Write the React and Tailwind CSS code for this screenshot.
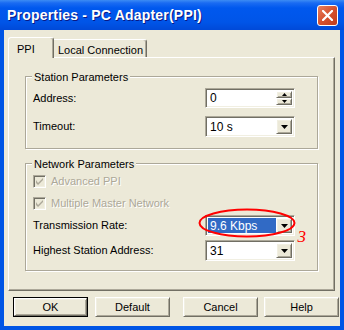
import React from "react";

const raised =
  "border border-t-white border-l-white border-r-[#716F64] border-b-[#716F64] shadow-[inset_1px_1px_0_#F1EFE2,inset_-1px_-1px_0_#ACA899]";
const sunken =
  "border border-t-[#ACA899] border-l-[#ACA899] border-r-white border-b-white shadow-[inset_1px_1px_0_#716F64,inset_-1px_-1px_0_#F1EFE2]";
const etched =
  "border border-[#ACA899] shadow-[inset_1px_1px_0_#fff,1px_1px_0_#fff]";

function Arrow({ small }) {
  return small ? (
    <svg width="5" height="3" viewBox="0 0 5 3">
      <path d="M0 0h5L2.5 3z" fill="#000" />
    </svg>
  ) : (
    <svg width="7" height="4" viewBox="0 0 7 4">
      <path d="M0 0h7L3.5 4z" fill="#000" />
    </svg>
  );
}

function Combo({ value, selected }) {
  return (
    <div className={`flex h-[21px] w-[90px] bg-white p-[2px] ${sunken}`}>
      <div
        className={`flex-1 flex items-center pl-[2px] text-[12px] leading-none ${
          selected ? "bg-[#316AC5] text-white" : "text-black"
        }`}
      >
        {value}
      </div>
      <div className={`flex h-[15px] w-[16px] items-center justify-center bg-[#ECE9D8] ${raised}`}>
        <Arrow />
      </div>
    </div>
  );
}

function Spin({ value }) {
  return (
    <div className={`flex h-[20px] w-[90px] bg-white p-[2px] ${sunken}`}>
      <div className="flex-1 flex items-center pl-[2px] text-[12px] leading-none">{value}</div>
      <div className="flex flex-col w-[16px]">
        <div className={`flex h-[8px] items-center justify-center bg-[#ECE9D8] ${raised}`}>
          <div className="rotate-180 flex">
            <Arrow small />
          </div>
        </div>
        <div className={`flex h-[8px] items-center justify-center bg-[#ECE9D8] ${raised}`}>
          <Arrow small />
        </div>
      </div>
    </div>
  );
}

function Check({ label }) {
  return (
    <div className="flex items-center h-[13px] gap-[5px]">
      <div className={`flex h-[13px] w-[13px] items-center justify-center bg-[#ECE9D8] ${sunken}`}>
        <svg width="7" height="7" viewBox="0 0 7 7">
          <path d="M0 2v3l2 2 5-5V-0L2 5z" fill="#ACA899" />
        </svg>
      </div>
      <span className="text-[#ACA899] [text-shadow:1px_1px_0_#fff]">{label}</span>
    </div>
  );
}

function Button({ label, isDefault, className = "" }) {
  if (isDefault) {
    return (
      <div className={`h-[20px] w-[75px] border border-black ${className}`}>
        <div className={`flex h-full items-center justify-center bg-[#ECE9D8] ${raised}`}>{label}</div>
      </div>
    );
  }
  return (
    <div className={`flex h-[20px] w-[75px] items-center justify-center bg-[#ECE9D8] ${raised} ${className}`}>
      {label}
    </div>
  );
}

export default function App() {
  return (
    <div className="w-[344px] h-[330px] flex flex-col bg-[#0055E5] font-['Liberation_Sans',Arial,sans-serif] text-[11px] text-black">
      {/* TITLE BAR */}
      <div className="h-[30px] flex items-center pl-[7px] pr-[6px] bg-[linear-gradient(#3C8CF4_0px,#1A6BF2_3px,#0058EE_8px,#0055E8_22px,#0049D8_30px)]">
        <span className="flex-1 text-white font-bold text-[14px] tracking-[0.2px] [text-shadow:1px_1px_0_#0A1883]">
          Properties - PC Adapter(PPI)
        </span>
        <div className="flex h-[21px] w-[21px] items-center justify-center rounded-[3px] border border-white bg-[linear-gradient(135deg,#E8805F,#D6512E_50%,#C13C1C)]">
          <svg width="11" height="11" viewBox="0 0 11 11">
            <path d="M1 1l9 9M10 1l-9 9" stroke="#fff" strokeWidth="2.2" strokeLinecap="square" />
          </svg>
        </div>
      </div>

      {/* BODY */}
      <div className="mx-[4px] h-[296px] bg-[#ECE9D8] pt-[7px] pl-[4px] flex flex-col">
        {/* TABS */}
        <div className="flex items-end h-[20px]">
          <div className="relative z-10 -mb-px h-[21px] w-[46px] rounded-t-[3px] border-l border-t border-r border-l-white border-t-white border-r-[#716F64] shadow-[inset_-1px_0_0_#ACA899] bg-[#ECE9D8] pl-[8px] pt-[3px]">
            PPI
          </div>
          <div className="h-[18px] w-[93px] rounded-tr-[3px] border-t border-r border-t-white border-r-[#716F64] shadow-[inset_-1px_0_0_#ACA899] pl-[4px] pt-[2px]">
            Local Connection
          </div>
        </div>

        {/* PANEL */}
        <div className="h-[234px] w-[327px] border border-t-white border-l-white border-r-[#716F64] border-b-[#716F64] shadow-[inset_-1px_-1px_0_#ACA899] pl-[16px] pt-[18px]">
          {/* STATION PARAMETERS */}
          <div className={`relative w-[293px] h-[73px] pl-[7px] pr-[22px] pt-[11px] ${etched}`}>
            <span className="absolute -top-[8px] left-[6px] bg-[#ECE9D8] px-[2px]">Station Parameters</span>
            <div className="flex items-center">
              <span className="flex-1">Address:</span>
              <Spin value="0" />
            </div>
            <div className="flex items-center mt-[8px]">
              <span className="flex-1">Timeout:</span>
              <Combo value="10 s" />
            </div>
          </div>

          {/* NETWORK PARAMETERS */}
          <div className={`relative mt-[14px] w-[293px] h-[108px] pl-[7px] pr-[22px] pt-[11px] ${etched}`}>
            <span className="absolute -top-[8px] left-[6px] bg-[#ECE9D8] px-[2px]">Network Parameters</span>
            <Check label="Advanced PPI" />
            <div className="mt-[9px]">
              <Check label="Multiple Master Network" />
            </div>
            <div className="relative flex items-center mt-[5px]">
              <span className="flex-1">Transmission Rate:</span>
              <Combo value="9.6 Kbps" selected />
              <svg className="absolute -top-[7px] -right-[2px] pointer-events-none" width="99" height="31" viewBox="0 0 99 31">
                <ellipse cx="49" cy="15" rx="47.5" ry="13.5" fill="none" stroke="#F00" strokeWidth="2" />
              </svg>
              <span className="absolute -right-[11px] top-[13px] text-[#F00] text-[17px] italic leading-none font-['Liberation_Serif',serif]">
                3
              </span>
            </div>
            <div className="flex items-center mt-[4px]">
              <span className="flex-1">Highest Station Address:</span>
              <Combo value="31" />
            </div>
          </div>
        </div>

        {/* BUTTONS */}
        <div className="flex mt-[6px] pl-[5px]">
          <Button label="OK" isDefault />
          <Button label="Default" className="ml-[7px]" />
          <Button label="Cancel" className="ml-[13px]" />
          <Button label="Help" className="ml-[6px]" />
        </div>
      </div>
    </div>
  );
}
